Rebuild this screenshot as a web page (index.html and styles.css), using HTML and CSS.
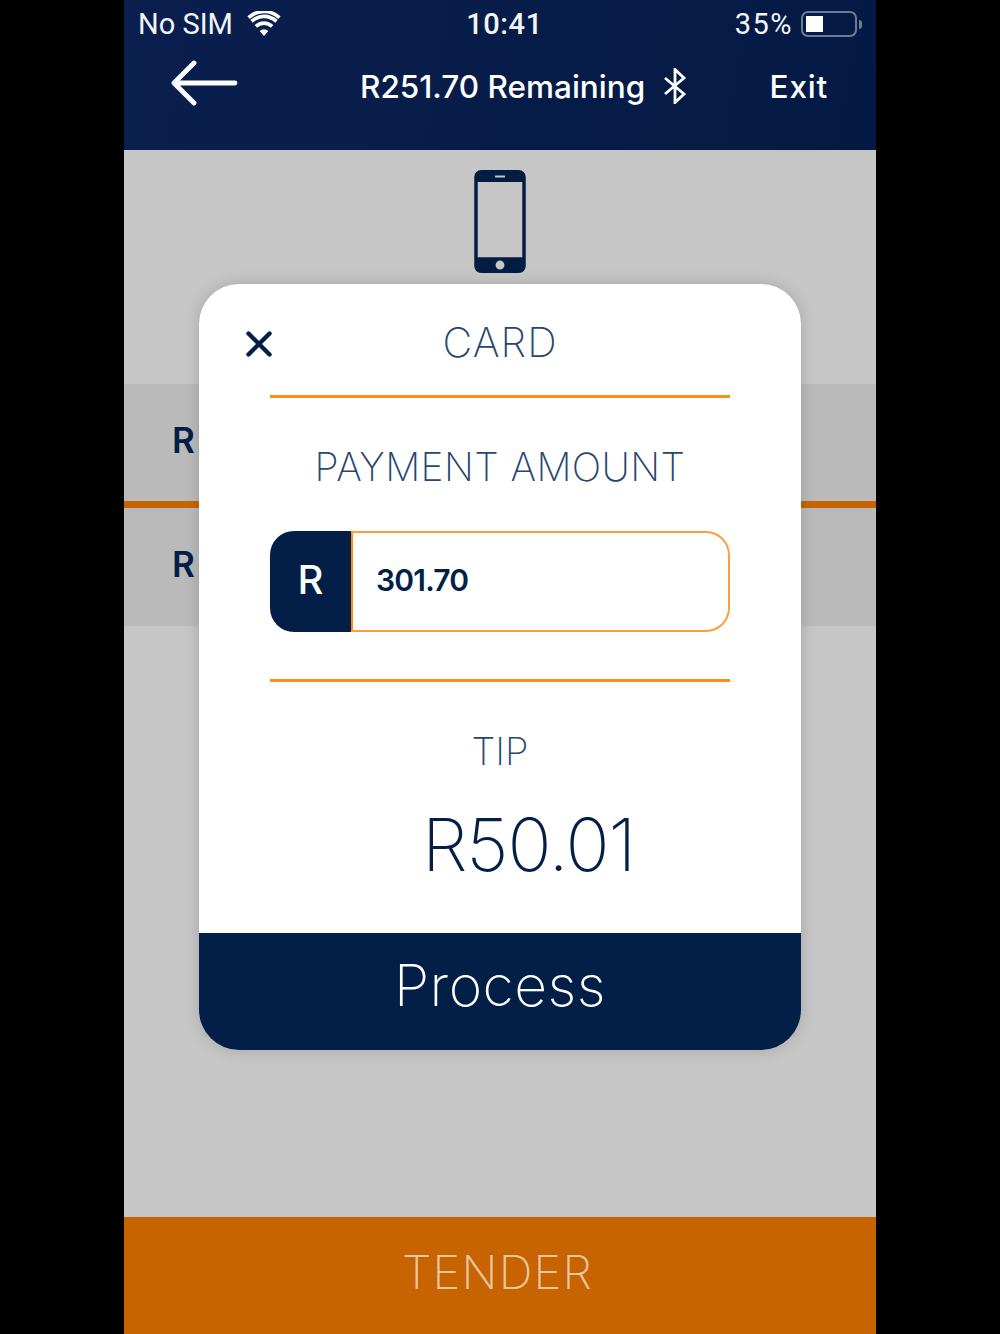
FILE: index.html
```html
<!DOCTYPE html>
<html lang="en">
<head>
<meta charset="utf-8">
<title>Card payment</title>
<link rel="stylesheet" href="styles.css">
</head>
<body>
<main class="phone">
  <header class="top">
    <div class="status">
      <div class="status-left">
        <span>No SIM</span>
        <svg class="wifi" viewBox="0 0 34 26" aria-hidden="true">
          <path d="M17 25 L12.6 20 A6.4 6.4 0 0 1 21.4 20 Z" fill="#fff"/>
          <path d="M8.9 15.4 A11.6 11.6 0 0 1 25.1 15.4 M4.6 10.4 A17.8 17.8 0 0 1 29.4 10.4 M1.6 6.6 A22.6 22.6 0 0 1 32.4 6.6" fill="none" stroke="#fff" stroke-width="3.6"/>
        </svg>
      </div>
      <span class="clock">10:41</span>
      <div class="status-right">
        <span class="battery-pct">35%</span>
        <div class="battery"><div class="battery-fill"></div></div>
        <div class="battery-cap"></div>
      </div>
    </div>
    <nav class="nav">
      <svg class="back" viewBox="0 0 68 46" aria-hidden="true">
        <path d="M65 23 H5 M24 3 L4 23 L24 43" fill="none" stroke="#fff" stroke-width="4.8" stroke-linecap="round" stroke-linejoin="round"/>
      </svg>
      <div class="nav-title">
        <span>R251.70 Remaining</span>
        <svg class="bt" viewBox="0 0 24 36" aria-hidden="true">
          <path d="M2 10 L21 26 L12 34.500 V1.500 L21 10 L2 26" fill="none" stroke="#fff" stroke-width="2.800" stroke-linejoin="miter"/>
        </svg>
      </div>
      <span class="exit">Exit</span>
    </nav>
  </header>

  <section class="content">
    <div class="device-zone">
      <svg class="device" viewBox="0 0 52 104" aria-hidden="true">
        <path fill-rule="evenodd" fill="#031c42" d="M7 0 H45 A7 7 0 0 1 52 7 V97 A7 7 0 0 1 45 104 H7 A7 7 0 0 1 0 97 V7 A7 7 0 0 1 7 0 Z M3.500 12 V88 H48.500 V12 Z M21 5.500 V7.500 H31 V5.500 Z M26 91.500 A4.500 4.500 0 1 0 26 100.500 A4.500 4.500 0 1 0 26 91.500 Z"/>
      </svg>
    </div>
    <div class="row"><span class="row-r">R</span></div>
    <div class="row row-second"><span class="row-r">R</span></div>
  </section>

  <footer class="tender">TENDER</footer>

  <div class="overlay">
    <div class="modal">
      <div class="modal-head">
        <svg class="close" viewBox="0 0 26 26" aria-hidden="true">
          <path d="M2.500 2.500 L23.500 23.500 M23.500 2.500 L2.500 23.500" fill="none" stroke="#031f47" stroke-width="4.400" stroke-linecap="round"/>
        </svg>
        <h1 class="card-title">CARD</h1>
      </div>
      <div class="rule"></div>
      <h2 class="pay-label">PAYMENT AMOUNT</h2>
      <div class="amount">
        <span class="amount-prefix">R</span>
        <span class="amount-value">301.70</span>
      </div>
      <div class="rule rule-lower"></div>
      <h2 class="tip-label">TIP</h2>
      <div class="tip-value">R50.01</div>
      <div class="process">Process</div>
    </div>
  </div>
</main>
</body>
</html>
```

FILE: styles.css
```css
* { box-sizing: border-box; }
html, body { margin: 0; height: 100%; }
body {
  background: #000;
  display: flex;
  justify-content: center;
  font-family: "Inter", "Liberation Sans", sans-serif;
  overflow: hidden;
}
h1, h2 { margin: 0; font-weight: 200; }

.phone {
  position: relative;
  width: 752px;
  height: 1334px;
  display: flex;
  flex-direction: column;
  background: #c6c6c6;
}

.top {
  height: 150px;
  flex: none;
  color: #fff;
  background: linear-gradient(100deg, #0a1f4e 0%, #041a44 100%);
}
.status {
  height: 48px;
  padding: 0 14px 0 14px;
  display: grid;
  grid-template-columns: 1fr auto 1fr;
  align-items: center;
  font-family: "Roboto", "Liberation Sans", sans-serif;
  font-size: 29px;
  color: #f2f4f8;
}
.status-left { display: flex; align-items: center; gap: 14px; }
.wifi { width: 34px; height: 26px; margin-top: -1px; }
.clock { font-weight: 500; font-size: 29px; letter-spacing: 0.6px; margin-left: 9px; }
.status-right { display: flex; align-items: center; justify-content: flex-end; }
.battery-pct { margin-right: 8px; letter-spacing: 1.5px; }
.battery {
  width: 56px;
  height: 26px;
  border: 2px solid #6e7b95;
  border-radius: 7px;
  padding: 3px;
}
.battery-fill { width: 17px; height: 100%; background: #fff; }
.battery-cap { width: 3px; height: 9px; margin-left: 2px; background: #6e7b95; border-radius: 0 3px 3px 0; }

.nav {
  height: 78px;
  display: flex;
  align-items: center;
  padding: 0 48px 2px 46px;
  font-size: 31.5px;
  font-weight: 500;
}
.back { width: 68px; height: 46px; flex: none; margin-top: -7px; }
.nav-title { display: flex; align-items: center; gap: 18px; margin-left: 122px; }
.bt { width: 24px; height: 36px; flex: none; }
.exit { margin-left: auto; letter-spacing: 0.8px; }

.content { flex: 1; display: flex; flex-direction: column; }
.device-zone { height: 234px; display: flex; justify-content: center; padding-top: 20px; }
.device { width: 52px; height: 103px; }
.row {
  height: 124px;
  padding: 0 0 6px 48px;
  display: flex;
  align-items: center;
  background: #bababa;
  border-bottom: 7px solid #c86400;
}
.row-second { height: 118px; border-bottom: 0; padding-bottom: 6px; }
.row-r { font-size: 35px; font-weight: 600; color: #031f47; }

.tender {
  height: 117px;
  flex: none;
  padding: 0 5px 8px 0;
  background: #c86400;
  color: #e9c8a4;
  font-size: 47px;
  font-weight: 200;
  display: flex;
  align-items: center;
  justify-content: center;
  letter-spacing: 1.2px;
}

.overlay {
  position: absolute;
  inset: 0;
  padding-top: 284px;
  display: flex;
  justify-content: center;
  align-items: flex-start;
}
.modal {
  width: 602px;
  height: 766px;
  background: #fff;
  border-radius: 40px;
  overflow: hidden;
  display: flex;
  flex-direction: column;
  align-items: center;
  box-shadow: 0 0 16px rgba(0, 0, 0, 0.16);
  color: #031f47;
}
.modal-head {
  position: relative;
  width: 100%;
  height: 111px;
  flex: none;
  display: flex;
  align-items: center;
  justify-content: center;
  padding-top: 4px;
}
.close { position: absolute; left: 47px; top: 47px; width: 26px; height: 26px; }
.card-title { font-size: 41px; color: #28466e; letter-spacing: 1px; }
.rule { width: 460px; height: 3px; flex: none; background: #ff8c14; }
.rule-lower { margin-top: 47px; }
.pay-label { margin-top: 46px; height: 46px; line-height: 46px; font-size: 39px; color: #28466e; letter-spacing: 0.4px; }
.amount {
  width: 460px;
  height: 101px;
  margin-top: 41px;
  flex: none;
  display: flex;
}
.amount-prefix {
  width: 81px;
  flex: none;
  padding-bottom: 4px;
  background: #031f47;
  border-radius: 24px 0 0 24px;
  color: #fff;
  font-size: 40px;
  font-weight: 500;
  display: flex;
  align-items: center;
  justify-content: center;
}
.amount-value {
  flex: 1;
  padding: 0 0 4px 23px;
  border: 2px solid #ff9d3c;
  border-left-color: #ff8c14;
  border-radius: 0 24px 24px 0;
  font-size: 30px;
  font-weight: 600;
  display: flex;
  align-items: center;
  letter-spacing: -0.8px;
}
.tip-label { margin-top: 46px; height: 46px; line-height: 46px; font-size: 38px; color: #28466e; }
.tip-value { margin-top: 31px; height: 80px; line-height: 80px; font-size: 73px; font-weight: 200; padding-left: 57px; letter-spacing: -1.2px; }
.process {
  margin-top: auto;
  width: 100%;
  height: 117px;
  flex: none;
  padding-bottom: 12px;
  background: #031f47;
  color: #fff;
  font-size: 57px;
  font-weight: 200;
  display: flex;
  align-items: center;
  justify-content: center;
  letter-spacing: 0.5px;
}
```
